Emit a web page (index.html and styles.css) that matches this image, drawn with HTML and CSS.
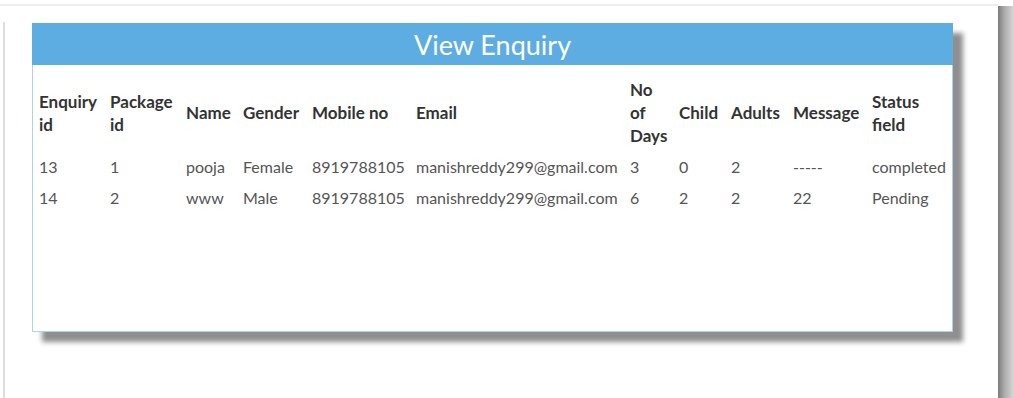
FILE: index.html
```html
<!DOCTYPE html>
<html lang="en">
<head>
    <meta charset="UTF-8">
    <meta name="viewport" content="width=device-width, initial-scale=1.0">
    <title>View Enquiry</title>
    <link rel="stylesheet" href="styles.css">
</head>
<body>
    <div class="top-rule"></div>
    <div class="page">
        <div class="content">
            <!-- enquiry card -->
            <div class="card">
                <h2 class="card-title">View Enquiry</h2>
                <div class="card-body">
                    <table class="enquiry-table">
                        <colgroup>
                            <col class="col-id">
                            <col class="col-package">
                            <col class="col-name">
                            <col class="col-gender">
                            <col class="col-mobile">
                            <col class="col-email">
                            <col class="col-days">
                            <col class="col-child">
                            <col class="col-adults">
                            <col class="col-message">
                            <col class="col-status">
                        </colgroup>
                        <thead>
                            <tr>
                                <th>Enquiry id</th>
                                <th>Package id</th>
                                <th>Name</th>
                                <th>Gender</th>
                                <th>Mobile no</th>
                                <th>Email</th>
                                <th>No of Days</th>
                                <th>Child</th>
                                <th>Adults</th>
                                <th>Message</th>
                                <th>Status field</th>
                            </tr>
                        </thead>
                        <tbody>
                            <tr>
                                <td>13</td>
                                <td>1</td>
                                <td>pooja</td>
                                <td>Female</td>
                                <td>8919788105</td>
                                <td>manishreddy299@gmail.com</td>
                                <td>3</td>
                                <td>0</td>
                                <td>2</td>
                                <td>-----</td>
                                <td>completed</td>
                            </tr>
                            <tr>
                                <td>14</td>
                                <td>2</td>
                                <td>www</td>
                                <td>Male</td>
                                <td>8919788105</td>
                                <td>manishreddy299@gmail.com</td>
                                <td>6</td>
                                <td>2</td>
                                <td>2</td>
                                <td>22</td>
                                <td>Pending</td>
                            </tr>
                        </tbody>
                    </table>
                </div>
            </div>
        </div>
        <div class="scroll-edge"></div>
    </div>
</body>
</html>
```

FILE: styles.css
```css
* {
    margin: 0;
    padding: 0;
    box-sizing: border-box;
}
body {
    font-family: Lato, "Open Sans", sans-serif;
    background-color: #fff;
    color: #333;
}
.top-rule {
    margin-top: 4px;
    width: 998px;
    height: 2px;
    background-color: #eeeeee;
}
.page {
    display: flex;
    height: 392px;
}
.content {
    flex: 1;
    margin: 16px 0 0 3px;
    border-left: 2px solid #dddddd;
    padding: 1px 0 0 27px;
}
.scroll-edge {
    width: 15px;
    background: linear-gradient(to right, #7a7a7a, #a9a9a9 40%, #d5d5d5);
}
.card {
    width: 921px;
    box-shadow: 10px 10px 5px #8f8f8f;
    background-color: #fff;
}
.card-title {
    height: 42px;
    background-color: #5dade2;
    color: #fff;
    text-align: center;
    font-weight: normal;
    font-size: 27px;
    line-height: 44px;
}
.card-body {
    height: 267px;
    border: 1px solid #a9d3ee;
    border-top: none;
    padding-top: 9px;
}
.enquiry-table {
    width: 100%;
    table-layout: fixed;
    border-collapse: collapse;
    font-size: 16px;
    line-height: 23px;
}
.col-id { width: 71px; }
.col-package { width: 76px; }
.col-name { width: 57px; }
.col-gender { width: 69px; }
.col-mobile { width: 104px; }
.col-email { width: 214px; }
.col-days { width: 49px; }
.col-child { width: 52px; }
.col-adults { width: 62px; }
.col-message { width: 79px; }
.col-status { width: 86px; }
.enquiry-table th {
    text-align: left;
    font-size: 17px;
    font-weight: bold;
    color: #333;
    padding: 4px 6px;
    vertical-align: middle;
}
.enquiry-table td {
    color: #555;
    padding: 4px 6px;
    white-space: nowrap;
}
```
